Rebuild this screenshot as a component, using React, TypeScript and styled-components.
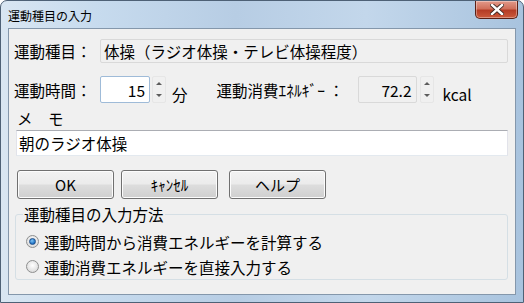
import React from "react";
import styled, { createGlobalStyle } from "styled-components";

const GlobalStyle = createGlobalStyle`
  html, body {
    margin: 0;
    padding: 0;
    background: #ffffff;
  }
  body {
    font-family: "Noto Sans CJK JP", "Noto Sans", sans-serif;
    color: #000;
  }
`;

const Frame = styled.div`
  width: 524px;
  height: 303px;
  box-sizing: border-box;
  padding: 0 7px 7px 7px;
  border: 1px solid #4e6176;
  border-radius: 7px 7px 0 0;
  background: linear-gradient(
    to right,
    #d9e6f2 0%,
    #c7dbee 18%,
    #b7cde4 45%,
    #c3d7eb 70%,
    #a8c3de 100%
  );
  display: flex;
  flex-direction: column;
`;

const TitleBar = styled.div`
  height: 27px;
  display: flex;
  align-items: flex-start;
  justify-content: space-between;
`;

const Title = styled.div`
  font-size: 12px;
  line-height: 14px;
  margin-top: 8px;
  color: #000;
`;

const CloseButton = styled.div`
  width: 43px;
  height: 18px;
  margin-right: -2px;
  box-sizing: border-box;
  border: 1px solid #5b2015;
  border-top: none;
  border-radius: 0 0 5px 5px;
  background: linear-gradient(to bottom, #e29a8a 0%, #d0705b 45%, #b53c25 55%, #cc5a3c 100%);
  display: flex;
  align-items: center;
  justify-content: center;
  box-shadow: inset 0 0 0 1px rgba(255, 255, 255, 0.35);
`;

const Client = styled.div`
  flex: 1;
  box-sizing: border-box;
  border: 1px solid #8497ab;
  background: #f0f0f0;
  padding: 10px 7px 0 5px;
  display: flex;
  flex-direction: column;
  font-size: 15.5px;
`;

const Row = styled.div<{ $top?: number; $height: number }>`
  display: flex;
  align-items: center;
  height: ${(p) => p.$height}px;
  margin-top: ${(p) => p.$top ?? 0}px;
`;

const Label = styled.div<{ $width: number; $gap?: number }>`
  width: ${(p) => p.$width}px;
  margin-left: ${(p) => p.$gap ?? 0}px;
  flex-shrink: 0;
  white-space: nowrap;
  line-height: 16px;
`;

const ReadBox = styled.div`
  width: 408px;
  height: 24px;
  box-sizing: border-box;
  border: 1px solid #d9d9d9;
  border-radius: 2px;
  background: #f0f0f0;
  padding-left: 3px;
  display: flex;
  align-items: center;
  white-space: nowrap;
  line-height: 16px;
`;

const NumBox = styled.div<{ $width: number; $readonly?: boolean }>`
  width: ${(p) => p.$width}px;
  height: 27px;
  box-sizing: border-box;
  border: 1px solid ${(p) => (p.$readonly ? "#d9d9d9" : "#9fbbd8")};
  border-radius: 2px;
  background: ${(p) => (p.$readonly ? "#f0f0f0" : "#ffffff")};
  display: flex;
  align-items: center;
  justify-content: flex-end;
  padding-right: 4px;
  line-height: 16px;
`;

const Spinner = styled.div<{ $gap: number }>`
  width: 14px;
  height: 27px;
  margin-left: ${(p) => p.$gap}px;
  display: flex;
  flex-direction: column;
  box-sizing: border-box;
  border: 1px solid #e6e6e6;
  border-radius: 2px;
`;

const SpinHalf = styled.div`
  flex: 1;
  display: flex;
  align-items: center;
  justify-content: center;
`;

const Arrow = styled.div<{ $up?: boolean }>`
  width: 0;
  height: 0;
  border-left: 3px solid transparent;
  border-right: 3px solid transparent;
  ${(p) => (p.$up ? "border-bottom: 3px solid #5c5c5c;" : "border-top: 3px solid #5c5c5c;")}
`;

const Unit = styled.div<{ $gap: number }>`
  margin-left: ${(p) => p.$gap}px;
  align-self: flex-end;
  line-height: 16px;
  margin-bottom: 1px;
  white-space: nowrap;
`;

const MemoLabel = styled.div`
  margin: 7px 0 0 3px;
  height: 16px;
  line-height: 16px;
`;

const MemoBox = styled.div`
  margin: 4px 0 0 2px;
  height: 26px;
  box-sizing: border-box;
  border: 1px solid #e2e3ea;
  border-top-color: #abadb3;
  border-bottom-color: #e3e9ef;
  background: #fff;
  padding-left: 2px;
  display: flex;
  align-items: center;
  line-height: 16px;
`;

const ButtonRow = styled.div`
  display: flex;
  gap: 7px;
  margin: 14px 0 0 3px;
`;

const Button = styled.div<{ $extra?: number }>`
  width: 97px;
  height: 29px;
  margin-left: ${(p) => p.$extra ?? 0}px;
  box-sizing: border-box;
  border: 1px solid #707070;
  border-radius: 3px;
  background: linear-gradient(to bottom, #f2f2f2 0%, #ebebeb 49%, #dddddd 51%, #cfcfcf 100%);
  box-shadow: inset 0 0 0 1px #fcfcfc;
  display: flex;
  align-items: center;
  justify-content: center;
  font-size: 15px;
  line-height: 16px;
`;

const Group = styled.fieldset`
  margin: 7px 0 0 1px;
  padding: 7px 0 0 10px;
  height: 74px;
  box-sizing: border-box;
  border: 1px solid #d5dfe5;
  border-radius: 3px;
  min-inline-size: 0;
`;

const Legend = styled.legend`
  padding: 0 1px;
  margin-left: -3px;
  line-height: 16px;
  font-size: 15.5px;
`;

const RadioRow = styled.div`
  display: flex;
  align-items: center;
  height: 25px;
`;

const RadioDot = styled.div<{ $checked?: boolean }>`
  width: 13px;
  height: 13px;
  box-sizing: border-box;
  border-radius: 50%;
  border: 1px solid #8e8f8f;
  background: radial-gradient(circle at 50% 40%, #ffffff 0%, #e4e4e4 60%, #cfcfcf 100%);
  display: flex;
  align-items: center;
  justify-content: center;
  margin-right: 5px;
  &::after {
    content: "";
    display: ${(p) => (p.$checked ? "block" : "none")};
    width: 5px;
    height: 5px;
    border-radius: 50%;
    background: radial-gradient(circle at 40% 35%, #7fc4f5 0%, #1b6fc2 70%, #124f94 100%);
    border: 1px solid #1f4f8a;
  }
`;

const RadioText = styled.div`
  line-height: 16px;
  white-space: nowrap;
`;

const SpinButtons: React.FC<{ gap: number }> = ({ gap }) => (
  <Spinner $gap={gap}>
    <SpinHalf>
      <Arrow $up />
    </SpinHalf>
    <SpinHalf>
      <Arrow />
    </SpinHalf>
  </Spinner>
);

const App: React.FC = () => {
  return (
    <>
      <GlobalStyle />
      <Frame>
        <TitleBar>
          <Title>運動種目の入力</Title>
          <CloseButton>
            <svg width="14" height="11" viewBox="0 0 14 11">
              <path
                d="M2 1 L12 10 M12 1 L2 10"
                stroke="#3a2520"
                strokeWidth="4.2"
                strokeLinecap="square"
              />
              <path
                d="M2 1 L12 10 M12 1 L2 10"
                stroke="#ffffff"
                strokeWidth="2.4"
                strokeLinecap="square"
              />
            </svg>
          </CloseButton>
        </TitleBar>
        <Client>
          <Row $height={24}>
            <Label $width={86}>運動種目：</Label>
            <ReadBox>体操（ラジオ体操・テレビ体操程度）</ReadBox>
          </Row>
          <Row $top={13} $height={27}>
            <Label $width={86}>運動時間：</Label>
            <NumBox $width={50}>15</NumBox>
            <SpinButtons gap={2} />
            <Unit $gap={6}>分</Unit>
            <Label $width={141} $gap={29}>
              運動消費ｴﾈﾙｷﾞｰ ：
            </Label>
            <NumBox $width={59} $readonly>
              72.2
            </NumBox>
            <SpinButtons gap={3} />
            <Unit $gap={9}>kcal</Unit>
          </Row>
          <MemoLabel>メ　モ</MemoLabel>
          <MemoBox>朝のラジオ体操</MemoBox>
          <ButtonRow>
            <Button>OK</Button>
            <Button>ｷｬﾝｾﾙ</Button>
            <Button $extra={4}>ヘルプ</Button>
          </ButtonRow>
          <Group>
            <Legend>運動種目の入力方法</Legend>
            <RadioRow>
              <RadioDot $checked />
              <RadioText>運動時間から消費エネルギーを計算する</RadioText>
            </RadioRow>
            <RadioRow>
              <RadioDot />
              <RadioText>運動消費エネルギーを直接入力する</RadioText>
            </RadioRow>
          </Group>
        </Client>
      </Frame>
    </>
  );
};

export default App;
